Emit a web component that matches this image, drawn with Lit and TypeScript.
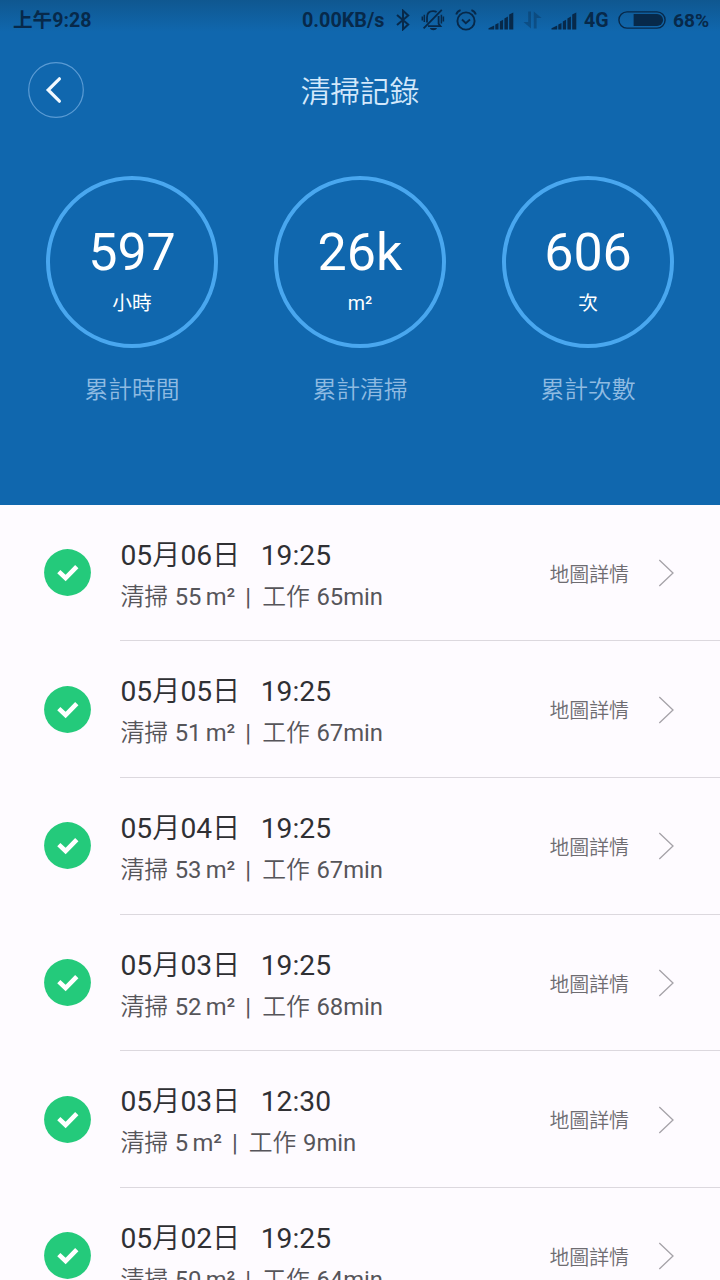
import { LitElement, html, svg, css } from "lit";
import { customElement, property } from "lit/decorators.js";

interface CleanRecord {
  month: string;
  day: string;
  time: string;
  area: number;
  minutes: number;
}

const RECORDS: CleanRecord[] = [
  { month: "05", day: "06", time: "19:25", area: 55, minutes: 65 },
  { month: "05", day: "05", time: "19:25", area: 51, minutes: 67 },
  { month: "05", day: "04", time: "19:25", area: 53, minutes: 67 },
  { month: "05", day: "03", time: "19:25", area: 52, minutes: 68 },
  { month: "05", day: "03", time: "12:30", area: 5, minutes: 9 },
  { month: "05", day: "02", time: "19:25", area: 50, minutes: 64 },
];

const STATS = [
  { value: "597", unit: "小時", label: "累計時間" },
  { value: "26k", unit: "m²", label: "累計清掃" },
  { value: "606", unit: "次", label: "累計次數" },
];

const signal = html`<svg class="signal" width="26" height="18" viewBox="0 0 26 18">
  ${svg`<path d="M0.5 17.5V16.2L6.2 13.6V17.5ZM7.3 17.5V12.6L10.5 11V17.5ZM11.8 17.5V9.5L15.1 7.8V17.5ZM16.4 17.5V6.5L19.9 4.6V17.5ZM21.2 17.5V2.6L25.3 0.5V17.5Z" fill="currentColor"/>`}
</svg>`;

@customElement("status-bar")
export class StatusBar extends LitElement {
  static styles = css`
    :host {
      display: flex;
      align-items: center;
      height: 40px;
      color: #07294a;
      font: 700 19.6px/40px Roboto, "Noto Sans CJK TC", sans-serif;
      white-space: nowrap;
    }
    svg { display: block; flex: none; }
    span { padding-top: 2px; line-height: 38px; }
    .clock { margin-left: 13px; width: 289px; }
    .speed { width: 94px; font-size: 19.8px; }
    .bell { margin-left: 10px; }
    .alarm { margin-left: 9px; }
    .signal { margin-left: 11px; margin-top: 1px; }
    .arrows { margin-left: 9px; opacity: 0.35; }
    .arrows + .signal { margin-left: 9px; }
    .net { margin-left: 7px; width: 34px; }
    .battery { margin-right: 7px; }
    .charge { font-size: 19.2px; }
  `;
  render() {
    return html`
      <span class="clock">上午9:28</span>
      <span class="speed">0.00KB/s</span>
      <svg width="14" height="22" viewBox="0 0 14 22">
        <path d="M1 6L12.2 15.6L7 20.3V1.7L12.2 6.4L1 16" fill="none" stroke="currentColor" stroke-width="2"/>
      </svg>
      <svg class="bell" width="26" height="24" viewBox="0 0 26 24" fill="none" stroke="currentColor" stroke-width="1.8">
        <path d="M3.6 20.3L21.8 1.8M7 14.5V9.5C7 5.3 9.4 3.1 13 3.1C14.4 3.1 15.8 3.4 16.6 4.1M18.6 8V15.8L20.4 18.1H8"/>
        <path d="M4.3 6.8V14M2.3 8.6V12.4M21.4 6.8V15.5M23.4 8.6V13.4" stroke-width="1.5"/>
        <path d="M9.8 20H17C16.4 21.6 15 22.2 13.4 22.2S10.4 21.6 9.8 20Z" fill="currentColor" stroke="none"/>
      </svg>
      <svg class="alarm" width="22" height="22" viewBox="0 0 22 22" fill="none" stroke="currentColor" stroke-width="1.9">
        <circle cx="11" cy="12" r="8.6"/>
        <path d="M7 10.5L10.8 14.2L15 10.5M1.2 5.5C1.8 3.6 3.4 1.9 5.6 1.2M20.8 5.5C20.2 3.6 18.6 1.9 16.4 1.2"/>
      </svg>
      ${signal}
      <svg class="arrows" width="19" height="18" viewBox="0 0 19 18">
        <path d="M5.2 0.5H8V17.5L0.5 11H5.2ZM10.8 17.5V0.5L18.5 7H13.6V17.5Z" fill="currentColor"/>
      </svg>
      ${signal}
      <span class="net">4G</span>
      <svg class="battery" width="48" height="18" viewBox="0 0 48 18">
        <rect x="0.9" y="0.9" width="46.2" height="16.2" rx="8.1" fill="none" stroke="currentColor" stroke-width="1.4"/>
        <path d="M15.6 2.9H39A6.1 6.1 0 0 1 39 15.1H15.6Z" fill="currentColor"/>
      </svg>
      <span class="charge">68%</span>
    `;
  }
}

@customElement("stat-dial")
export class StatDial extends LitElement {
  @property() value = "";
  @property() unit = "";
  @property() label = "";
  static styles = css`
    :host {
      display: flex;
      flex-direction: column;
      align-items: center;
      width: 172px;
    }
    .ring {
      box-sizing: border-box;
      width: 172px;
      height: 172px;
      border: 4px solid #49a7ef;
      border-radius: 50%;
      display: flex;
      flex-direction: column;
      align-items: center;
      padding-top: 43px;
      color: #fff;
    }
    .value { font-size: 52px; line-height: 60px; }
    .unit { font-size: 19.7px; line-height: 24px; margin-top: 9px; }
    .label { margin-top: 25px; font-size: 23.8px; line-height: 34px; color: #8fbbe2; font-weight: 350; }
  `;
  render() {
    return html`
      <div class="ring">
        <div class="value">${this.value}</div>
        <div class="unit">${this.unit}</div>
      </div>
      <div class="label">${this.label}</div>
    `;
  }
}

@customElement("record-row")
export class RecordRow extends LitElement {
  @property({ attribute: false }) record!: CleanRecord;
  static styles = css`
    :host {
      display: flex;
      align-items: stretch;
      height: 136.7px;
      padding-left: 44px;
      flex: none;
    }
    svg { display: block; flex: none; }
    .badge { margin-top: 44.5px; }
    .body {
      flex: 1;
      margin-left: 29px;
      display: flex;
      border-bottom: 1px solid #dcd8de;
    }
    .text { flex: 1; padding: 33px 0 0 0.5px; white-space: nowrap; }
    .han { font-weight: 350; }
    .date { font-size: 28.2px; line-height: 36px; color: #303034; }
    .time { margin-left: 20.5px; }
    .info { margin-top: 6px; font-size: 23.8px; line-height: 34px; color: #56555a; word-spacing: 0.7px; }
    .unit { margin-left: 4.3px; }
    .bar { margin: 0 11px 0 10px; }
    .more {
      display: flex;
      padding-top: 55px;
      height: 28px;
      align-items: center;
      font-size: 19.9px;
      line-height: 28px;
      color: #6e6c71;
    }
    .more span { padding-top: 3px; line-height: 27px; }
    .more svg { margin: -1px 45px 0 29px; }
  `;
  render() {
    const r = this.record;
    return html`
      <svg class="badge" width="47" height="47" viewBox="0 0 47 47">
        <circle cx="23.5" cy="23.5" r="23.4" fill="#24ca7b"/>
        <path d="M14.8 22.6L21.6 29L32.8 17.6" fill="none" stroke="#fff" stroke-width="4.6"/>
      </svg>
      <div class="body">
        <div class="text">
          <div class="date">${r.month}<span class="han">月</span>${r.day}<span class="han">日</span><span class="time">${r.time}</span></div>
          <div class="info"><span class="han">清掃</span> ${r.area}<span class="unit">m²</span><span class="bar">|</span><span class="han">工作</span> ${r.minutes}min</div>
        </div>
        <div class="more">
          <span class="han">地圖詳情</span>
          <svg width="17" height="28" viewBox="0 0 17 28">
            <path d="M1.3 1L15 14L1.3 27" fill="none" stroke="#a5a2a8" stroke-width="1.3"/>
          </svg>
        </div>
      </div>
    `;
  }
}

@customElement("app-root")
export class AppRoot extends LitElement {
  static styles = css`
    :host {
      display: flex;
      flex-direction: column;
      width: 720px;
      height: 1280px;
      overflow: hidden;
      background: #fefbff;
      font-family: Roboto, "Noto Sans CJK TC", sans-serif;
    }
    .hero {
      flex: none;
      height: 504.5px;
      background: linear-gradient(#0f5790, #1067ae 32px, #1067ae);
    }
    .title-bar {
      display: grid;
      grid-template-columns: 56px 1fr 56px;
      align-items: center;
      padding: 22px 28px 0;
      height: 56px;
    }
    .title {
      text-align: center;
      font-size: 29.7px;
      line-height: 40px;
      padding-top: 4px;
      font-weight: 350;
      color: #d3e8fb;
    }
    .stats {
      display: flex;
      justify-content: space-between;
      padding: 58px 46px 0;
    }
    .list { display: flex; flex-direction: column; }
  `;
  render() {
    return html`
      <header class="hero">
        <status-bar></status-bar>
        <div class="title-bar">
          <svg width="56" height="56" viewBox="0 0 56 56" fill="none">
            <circle cx="28" cy="28" r="27.3" stroke="#5a9bd4" stroke-width="1.2"/>
            <path d="M31.4 16.8L20.2 28L31.4 39.2" stroke="#f2f9ff" stroke-width="3.2" stroke-linecap="round"/>
          </svg>
          <div class="title">清掃記錄</div>
        </div>
        <div class="stats">
          ${STATS.map((s) => html`<stat-dial value=${s.value} unit=${s.unit} label=${s.label}></stat-dial>`)}
        </div>
      </header>
      <main class="list">
        ${RECORDS.map((r) => html`<record-row .record=${r}></record-row>`)}
      </main>
    `;
  }
}
